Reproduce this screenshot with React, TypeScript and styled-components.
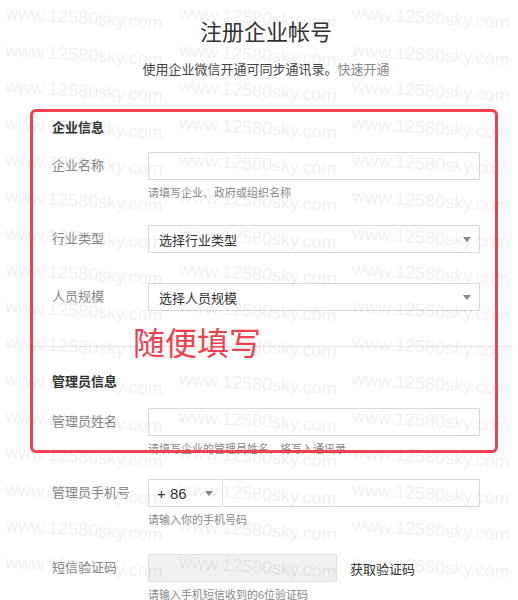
import React, { FC } from 'react';
import styled, { createGlobalStyle } from 'styled-components';

const GlobalStyle = createGlobalStyle`
  html, body {
    margin: 0;
    padding: 0;
    background: #fff;
  }
  body {
    font-family: "Liberation Sans", "Noto Sans CJK SC", sans-serif;
  }
`;

const Page = styled.div`
  position: relative;
  width: 518px;
  height: 600px;
  overflow: hidden;
  background: #fff;
`;

const Header = styled.header`
  padding: 18px 0 0 14px;
  text-align: center;
`;

const Title = styled.h1`
  margin: 0;
  font-size: 22px;
  line-height: 30px;
  font-weight: 400;
  color: #333;
`;

const Subtitle = styled.p`
  margin: 13px 0 0;
  font-size: 13px;
  line-height: 18px;
  color: #444;
`;

const QuickLink = styled.span`
  color: #888;
`;

const Form = styled.form`
  padding: 0 38px 0 52px;
`;

const SectionTitle = styled.h2<{ $top: number }>`
  margin: ${(p) => p.$top}px 0 0;
  font-size: 13px;
  line-height: 20px;
  font-weight: 700;
  color: #333;
`;

const Field = styled.div<{ $top: number }>`
  display: grid;
  grid-template-columns: 96px 1fr;
  margin-top: ${(p) => p.$top}px;
`;

const Label = styled.label`
  height: 28px;
  line-height: 28px;
  font-size: 13px;
  color: #888;
  white-space: nowrap;
`;

const Hint = styled.div`
  grid-column: 2;
  margin-top: 5px;
  font-size: 11px;
  line-height: 16px;
  color: #888;
`;

const Input = styled.input`
  display: block;
  box-sizing: border-box;
  width: 100%;
  height: 28px;
  margin: 0;
  padding: 0 10px;
  border: 1px solid #d9d9d9;
  border-radius: 1px;
  background: #fff;
  font: inherit;
  font-size: 13px;
  outline: none;
`;

const Select = styled.div`
  display: flex;
  align-items: center;
  justify-content: space-between;
  box-sizing: border-box;
  height: 28px;
  padding: 0 8px 0 10px;
  border: 1px solid #d9d9d9;
  border-radius: 1px;
  font-size: 13px;
  color: #333;
`;

const Caret = styled.i`
  width: 0;
  height: 0;
  border-left: 4px solid transparent;
  border-right: 4px solid transparent;
  border-top: 5px solid #888;
`;

const PhoneGroup = styled.div`
  display: flex;
`;

const Prefix = styled(Select)`
  width: 75px;
  flex: none;
  font-size: 15px;
  padding: 0 9px 0 8px;
`;

const PhoneInput = styled(Input)`
  flex: 1;
  border-left: none;
`;

const CodeRow = styled.div`
  display: flex;
  align-items: center;
`;

const CodeInput = styled(Input)`
  width: 189px;
  background: #f0f0f0;
  border-color: #e0e0e0;
`;

const CodeButton = styled.span`
  margin-left: 13px;
  font-size: 13px;
  color: #333;
`;

const Divider = styled.hr`
  height: 1px;
  margin: 35px -33px 0 -20px;
  border: none;
  background: #e8e8e8;
`;

const Watermark = styled.div`
  position: absolute;
  inset: 0;
  z-index: 2;
  display: grid;
  grid-template-columns: repeat(3, 173.5px);
  grid-auto-rows: 36.6px;
  padding-left: 5px;
  pointer-events: none;
`;

const Mark = styled.span`
  font-family: "Liberation Sans", sans-serif;
  font-size: 18px;
  line-height: 36.6px;
  color: rgba(0, 0, 0, 0.075);
  white-space: nowrap;
  transform: rotate(3.5deg);
  transform-origin: 80px center;
`;

const AnnotationBox = styled.div`
  position: absolute;
  left: 30px;
  top: 109px;
  width: 468px;
  height: 344px;
  box-sizing: border-box;
  border: 3px solid #f1414f;
  border-radius: 6px;
  z-index: 3;
  pointer-events: none;
`;

const AnnotationNote = styled.span`
  position: absolute;
  left: 133px;
  top: 321px;
  z-index: 3;
  font-family: "Noto Sans CJK SC", sans-serif;
  font-size: 32px;
  line-height: 40px;
  color: #f1414f;
`;

// 16 rows x 3 columns of the site watermark
const marks = Array.from({ length: 16 * 3 }, (_, i) => i);

const App: FC = () => {
  return (
    <Page>
      <GlobalStyle />
      <Header>
        <Title>注册企业帐号</Title>
        <Subtitle>
          使用企业微信开通可同步通讯录。<QuickLink>快速开通</QuickLink>
        </Subtitle>
      </Header>

      <Form>
        <SectionTitle $top={39}>企业信息</SectionTitle>
        <Field $top={14}>
          <Label>企业名称</Label>
          <Input />
          <Hint>请填写企业、政府或组织名称</Hint>
        </Field>
        <Field $top={24}>
          <Label>行业类型</Label>
          <Select>
            选择行业类型
            <Caret />
          </Select>
        </Field>
        <Field $top={30}>
          <Label>人员规模</Label>
          <Select>
            选择人员规模
            <Caret />
          </Select>
        </Field>

        <Divider />

        <SectionTitle $top={25}>管理员信息</SectionTitle>
        <Field $top={16}>
          <Label>管理员姓名</Label>
          <Input />
          <Hint>请填写企业的管理员姓名，将写入通讯录</Hint>
        </Field>
        <Field $top={22}>
          <Label>管理员手机号</Label>
          <PhoneGroup>
            <Prefix>
              + 86
              <Caret />
            </Prefix>
            <PhoneInput />
          </PhoneGroup>
          <Hint>请输入你的手机号码</Hint>
        </Field>
        <Field $top={26}>
          <Label>短信验证码</Label>
          <CodeRow>
            <CodeInput disabled />
            <CodeButton>获取验证码</CodeButton>
          </CodeRow>
          <Hint>请输入手机短信收到的6位验证码</Hint>
        </Field>
      </Form>

      <Watermark>
        {marks.map((i) => (
          <Mark key={i}>www.12580sky.com</Mark>
        ))}
      </Watermark>

      <AnnotationBox />
      <AnnotationNote>随便填写</AnnotationNote>
    </Page>
  );
};

export default App;
